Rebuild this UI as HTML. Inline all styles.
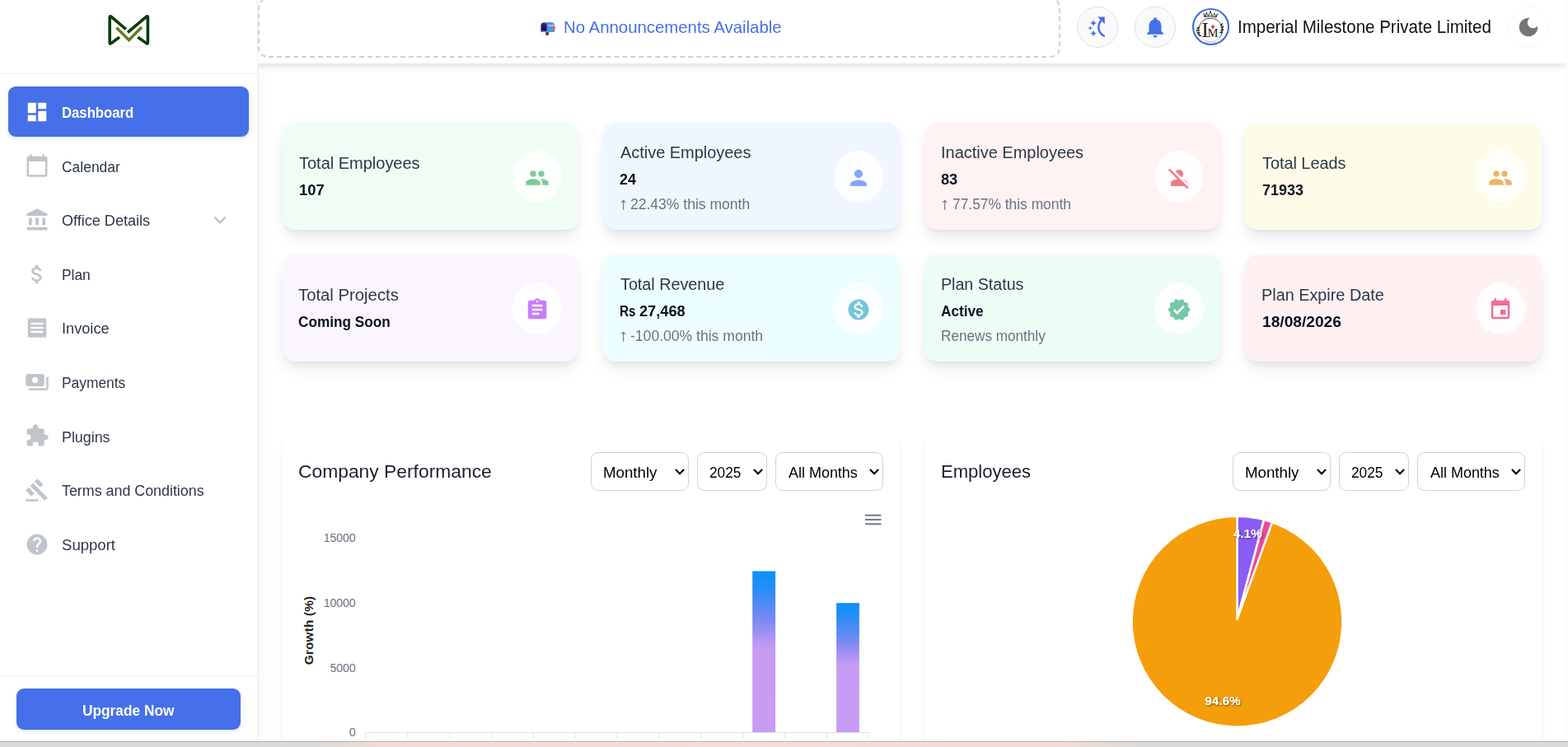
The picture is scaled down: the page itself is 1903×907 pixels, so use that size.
<!DOCTYPE html>
<html lang="en"><head><meta charset="utf-8"><title>Dashboard</title>
<style>
*{box-sizing:border-box;margin:0;padding:0}
html,body{width:1903px;height:907px;overflow:hidden;background:#fff;font-family:"Liberation Sans",sans-serif}
.a,.t,.ic{position:absolute}
.t{white-space:nowrap;line-height:1;transform-origin:0 0}
.card{position:absolute;width:359.5px;height:130px;border-radius:15px;box-shadow:0 10px 20px -3px rgba(0,0,0,.10),0 4px 6px -2px rgba(0,0,0,.05)}
.el{position:absolute;width:60px;height:63px;border-radius:50%;background:rgba(255,255,255,.82)}
.panel{position:absolute;top:528.5px;width:749px;height:420px;border-radius:13px;background:#fff;box-shadow:0 5px 6px rgba(0,0,0,.08)}
.sel{position:absolute;top:549px;height:47px;border:1px solid #cdd3dd;border-radius:9px;background:#fff}
.cbtn{position:absolute;width:50px;height:50px;border-radius:50%;top:8px}
</style></head><body>
<div class="a" style="left:0;top:0;width:313px;height:900px;background:#fff;box-shadow:4px 0 10px rgba(0,0,0,.04)"></div>
<div class="a" style="left:313px;top:0;width:1588px;height:77px;background:#fff;box-shadow:0 4px 6px rgba(0,0,0,.11)"></div>
<div class="a" style="left:0;top:0;width:313px;height:900px;background:#fff;border-right:1px solid #eceef0"></div>
<svg class="a" style="left:120px;top:10px" width="75" height="55" viewBox="120 10 75 55" fill="none">
<g style="filter:drop-shadow(.5px .6px .5px rgba(0,0,0,.3))" stroke-linecap="round" stroke-linejoin="round">
<path d="M152.9 35.5L134.75 20.16Q133.2 18.9 133.2 20.9L133.2 51.8Q133.2 53.8 134.84 52.65L145 45.1" stroke="#0b3d0c" stroke-width="3.5" stroke-linecap="butt"/>
<path d="M155 39.4L177.85 20.16Q179.4 18.9 179.4 20.9L179.4 51.8Q179.4 53.8 177.76 52.65L167.3 45.1" stroke="#0b3d0c" stroke-width="3.5" stroke-linecap="butt"/>
<path d="M141.4 33.7L156.5 48.7L171.9 33" stroke="#5f7f1b" stroke-width="3.3" stroke-linecap="butt" stroke-linejoin="miter"/>
</g>
<line x1="138" y1="56.9" x2="174" y2="56.9" stroke="#d4d4d4" stroke-width=".8" stroke-dasharray="2 1.2"/>
</svg>
<div class="a" style="left:0;top:89px;width:312px;height:1px;background:#eff0f2"></div>
<div class="a" style="left:10px;top:105px;width:292px;height:61px;border-radius:9px;background:#4570ea;box-shadow:0 2px 5px rgba(69,112,234,.2)"></div>
<svg class="ic" style="left:30px;top:121.0px" width="30" height="30" viewBox="0 0 24 24" fill="#ffffff" ><path d="M3 13h8V3H3v10zm0 8h8v-6H3v6zm10 0h8V11h-8v10zm0-18v6h8V3h-8z"/></svg>
<svg class="ic" style="left:30px;top:185.68px" width="30" height="30" viewBox="0 0 24 24" fill="#bfc5ca" ><path d="M20 3h-1V1h-2v2H7V1H5v2H4c-1.1 0-2 .9-2 2v16c0 1.1.9 2 2 2h16c1.1 0 2-.9 2-2V5c0-1.1-.9-2-2-2zm0 18H4V8h16v13z"/></svg>
<svg class="ic" style="left:30px;top:252.16px" width="30" height="30" viewBox="0 0 24 24" fill="#bfc5ca" ><path d="M4 10h3v7H4zM10.5 10h3v7h-3zM2 19h20v3H2zM17 10h3v7h-3zM12 1L2 6v2h20V6z"/></svg>
<svg class="ic" style="left:30px;top:317.74px" width="30" height="30" viewBox="0 0 24 24" fill="#bfc5ca" ><path d="M11.8 10.9c-2.27-.59-3-1.2-3-2.15 0-1.09 1.01-1.85 2.7-1.85 1.78 0 2.44.85 2.5 2.1h2.21c-.07-1.72-1.12-3.3-3.21-3.81V3h-3v2.160c-1.94.42-3.5 1.68-3.5 3.61 0 2.31 1.91 3.46 4.7 4.13 2.5.6 3 1.48 3 2.41 0 .69-.49 1.79-2.7 1.79-2.06 0-2.87-.92-2.98-2.1h-2.2c.12 2.19 1.76 3.42 3.68 3.83V21h3v-2.150c1.95-.37 3.5-1.5 3.5-3.55 0-2.84-2.43-3.81-4.7-4.4z"/></svg>
<svg class="ic" style="left:30px;top:383.32px" width="30" height="30" viewBox="0 0 24 24" fill="#bfc5ca" ><path d="M18 17H6v-2h12v2zm0-4H6v-2h12v2zm0-4H6V7h12v2zM3 22l1.5-1.500L6 22l1.5-1.500L9 22l1.5-1.500L12 22l1.5-1.500L15 22l1.5-1.500L18 22l1.5-1.500L21 22V2l-1.500 1.500L18 2l-1.500 1.500L15 2l-1.500 1.500L12 2l-1.500 1.500L9 2 7.500 3.500 6 2 4.500 3.500 3 2v20z"/></svg>
<svg class="ic" style="left:30px;top:448.9px" width="30" height="30" viewBox="0 0 24 24" fill="#bfc5ca" ><path d="M19 14V6c0-1.100-.900-2-2-2H3c-1.100 0-2 .900-2 2v8c0 1.100.900 2 2 2h14c1.100 0 2-.900 2-2zm-9-1c-1.660 0-3-1.340-3-3s1.340-3 3-3 3 1.340 3 3-1.340 3-3 3zm13-6v11c0 1.100-.900 2-2 2H4v-2h17V7h2z"/></svg>
<svg class="ic" style="left:30px;top:514.48px" width="30" height="30" viewBox="0 0 24 24" fill="#bfc5ca" ><path d="M20.500 11H19V7c0-1.100-.900-2-2-2h-4V3.500C13 2.120 11.880 1 10.500 1S8 2.120 8 3.500V5H4c-1.100 0-1.990.900-1.990 2v3.800H3.500c1.490 0 2.700 1.210 2.700 2.700s-1.210 2.700-2.700 2.700H2V20c0 1.100.900 2 2 2h3.800v-1.500c0-1.490 1.210-2.700 2.700-2.700 1.490 0 2.700 1.210 2.700 2.700V22H17c1.100 0 2-.900 2-2v-4h1.500c1.380 0 2.500-1.120 2.500-2.500S21.880 11 20.500 11z"/></svg>
<svg class="ic" style="left:30px;top:580.06px" width="30" height="30" viewBox="0 0 24 24" fill="#bfc5ca" ><path d="M1 21h12v2H1zM5.245 8.070l2.830-2.830 14.140 14.140-2.830 2.830zM12.317 1l5.657 5.656-2.830 2.830-5.654-5.660zM3.825 9.485l5.657 5.657-2.828 2.828-5.657-5.657z"/></svg>
<svg class="ic" style="left:30px;top:645.64px" width="30" height="30" viewBox="0 0 24 24" fill="#bfc5ca" ><path d="M12 2C6.480 2 2 6.480 2 12s4.480 10 10 10 10-4.480 10-10S17.520 2 12 2zm1 17h-2v-2h2v2zm2.070-7.750l-.900.920C13.450 12.900 13 13.500 13 15h-2v-.500c0-1.100.450-2.100 1.170-2.830l1.240-1.260c.370-.360.590-.860.590-1.410 0-1.100-.900-2-2-2s-2 .900-2 2H8c0-2.210 1.790-4 4-4s4 1.790 4 4c0 .880-.360 1.680-.930 2.250z"/></svg>
<svg class="ic" style="left:252.1px;top:252.2px" width="30" height="30" viewBox="0 0 24 24" fill="#bfc5ca"><path d="M16.59 8.59L12 13.17 7.41 8.59 6 10l6 6 6-6z"/></svg>
<div class="a" style="left:0;top:820px;width:312px;height:1px;background:#eff0f2"></div>
<div class="a" style="left:20px;top:836px;width:272px;height:50px;border-radius:9px;background:#4570ea;box-shadow:0 2px 5px rgba(69,112,234,.2)"></div>
<div class="a" style="left:313px;top:-3px;width:974px;height:73px;border:2px dashed #c9d3e0;border-radius:12px"></div>
<svg class="a" style="left:654px;top:25px" width="22" height="20" viewBox="654 25 22 20">
<defs><linearGradient id="mbg" x1="0" y1="0" x2="1" y2="1"><stop offset="0" stop-color="#5a8fe0"/><stop offset="1" stop-color="#3f9be6"/></linearGradient>
<linearGradient id="mbd" x1="0" y1="0" x2="0" y2="1"><stop offset="0" stop-color="#4a1577"/><stop offset="1" stop-color="#24063f"/></linearGradient></defs>
<rect x="662.3" y="38" width="3.6" height="4.8" fill="#6b2e2e"/>
<path d="M656.1 38.9V31.2Q656.1 27.1 660.2 27.1H669.6Q673 27.1 673 31.5V38.9Z" fill="url(#mbg)"/>
<path d="M656.9 37.5V31.2Q656.9 27.9 660.2 27.9Q663.6 27.9 663.6 31.2V37.5Z" fill="url(#mbd)"/>
<rect x="665.2" y="29.9" width="8.6" height="2" rx=".8" fill="#b9b6cc"/>
<rect x="670.2" y="32" width="3.6" height="3.9" fill="#f4632f"/>
</svg>
<div class="cbtn" style="left:1307px;background:#fafafa;border:1px solid #e0e0e0"></div>
<div class="cbtn" style="left:1377px;background:#fafafa;border:1px solid #e0e0e0"></div>
<svg class="ic" style="left:1317px;top:18px" width="30" height="30" viewBox="0 0 24 24" fill="#4570ea" ><path d="M7.060 8.940L5 8l2.060-.940L8 5l.940 2.060L11 8l-2.060.940L8 11l-.940-2.060zM8 21l.940-2.060L11 18l-2.060-.940L8 15l-.940 2.060L5 18l2.060.940L8 21zm-3.630-7.470L3 12.900l1.370-.630L5 10.900l.630 1.370L7 12.900l-1.370.630L5 14.900l-.630-1.370zM12 12c0-2.730 1.080-5.270 2.750-7.250L12 2h7v7l-2.820-2.820C14.840 7.820 14 9.880 14 12c0 3.320 2.100 6.360 5 7.820V22c-4.090-1.590-7-5.650-7-10z"/></svg>
<svg class="ic" style="left:1387px;top:18px" width="30" height="30" viewBox="0 0 24 24" fill="#4570ea" ><path d="M12 22c1.100 0 2-.900 2-2h-4c0 1.100.890 2 2 2zm6-6v-5c0-3.070-1.640-5.640-4.500-6.320V4c0-.830-.670-1.500-1.500-1.500s-1.500.670-1.500 1.500v.680C7.630 5.360 6 7.920 6 11v5l-2 2v1h16v-1l-2-2z"/></svg>
<svg class="a" style="left:1445px;top:8px" width="50" height="50" viewBox="1445 8 50 50">
<circle cx="1469.5" cy="32.5" r="21.5" fill="#fff" stroke="#3f6be2" stroke-width="2.1"/>
<circle cx="1469.1" cy="36.3" r="14.4" fill="none" stroke="#b5b5b5" stroke-width=".6"/><circle cx="1469.1" cy="36.3" r="14.4" fill="none" stroke="#3a3a3a" stroke-width=".75" stroke-dasharray="58 32.5" transform="rotate(-190 1469.1 36.3)"/>
<path d="M1461.7 20.7L1461 16.6L1463.2 20.1L1464.2 15L1466.4 19.8L1468.9 13.8L1471.4 19.8L1473.9 16L1475.2 20.4L1477.7 16.6L1476.1 21Q1469 18.3 1461.7 20.7Z" fill="none" stroke="#303030" stroke-width=".95" stroke-linejoin="round"/><circle cx="1468.9" cy="13.9" r=".8" fill="#303030"/>
<g fill="#1d1d1d">
<ellipse cx="1454.2" cy="34" rx="2.2" ry=".9" transform="rotate(-35 1454.2 34)"/>
<ellipse cx="1453.6" cy="37" rx="2.3" ry=".9" transform="rotate(-15 1453.6 37)"/>
<ellipse cx="1454.3" cy="40" rx="2.3" ry=".9" transform="rotate(10 1454.3 40)"/>
<ellipse cx="1455.8" cy="42.8" rx="2.3" ry=".9" transform="rotate(30 1455.8 42.8)"/>
<ellipse cx="1482.6" cy="30" rx="2.2" ry=".9" transform="rotate(-50 1482.6 30)"/>
<ellipse cx="1483.6" cy="33" rx="2.3" ry=".9" transform="rotate(-35 1483.6 33)"/>
<ellipse cx="1483.3" cy="36.3" rx="2.3" ry=".9" transform="rotate(-20 1483.3 36.3)"/>
<ellipse cx="1482.2" cy="39.3" rx="2.2" ry=".9" transform="rotate(-5 1482.2 39.3)"/>
</g>
<path d="M1472 29.8L1474.3 32.5L1472 35.2L1469.7 32.5Z" fill="#f0343a"/>
<text x="1458.2" y="44.9" font-family="'Liberation Serif',serif" font-size="25.5" fill="#2b2411">I</text>
<text x="1465.6" y="44.9" font-family="'Liberation Serif',serif" font-size="15.6" fill="#2b2411" textLength="13" lengthAdjust="spacingAndGlyphs">M</text>
<line x1="1462.5" y1="51.2" x2="1476.5" y2="51.2" stroke="#b0b0b0" stroke-width=".9" stroke-dasharray="1.6 .8"/>
</svg>
<div class="cbtn" style="left:1830px;background:#fff;border:1px solid #f8f8f8"></div>
<svg class="ic" style="left:1840px;top:18px" width="30" height="30" viewBox="0 0 24 24" fill="#757575" ><path d="M12 3c-4.970 0-9 4.030-9 9s4.030 9 9 9 9-4.030 9-9c0-.460-.040-.920-.100-1.360-.980 1.370-2.580 2.260-4.400 2.260-2.980 0-5.400-2.420-5.400-5.400 0-1.810.890-3.420 2.260-4.400-.440-.060-.900-.100-1.360-.100z"/></svg>
<div class="card" style="left:343px;top:149px;width:359px;background:#f0fdf4"></div>
<div class="card" style="left:732px;top:149px;width:360px;background:#eff6ff"></div>
<div class="card" style="left:1122px;top:149px;width:359px;background:#fef2f2"></div>
<div class="card" style="left:1511px;top:149px;width:360px;background:#fefce8"></div>
<div class="card" style="left:343px;top:309px;width:359px;background:#faf5ff"></div>
<div class="card" style="left:732px;top:309px;width:360px;background:#ecfeff"></div>
<div class="card" style="left:1122px;top:309px;width:359px;background:#ecfdf5"></div>
<div class="card" style="left:1511px;top:309px;width:360px;background:#fff1f2"></div>
<div class="el" style="left:622px;top:182.9px"></div>
<svg class="ic" style="left:637px;top:200.8px" width="30" height="30" viewBox="0 0 24 24" fill="#7bcb9c" ><path d="M16 11c1.660 0 2.990-1.340 2.990-3S17.660 5 16 5c-1.660 0-3 1.340-3 3s1.340 3 3 3zm-8 0c1.660 0 2.990-1.340 2.990-3S9.660 5 8 5C6.340 5 5 6.340 5 8s1.340 3 3 3zm0 2c-2.330 0-7 1.170-7 3.500V19h14v-2.500c0-2.330-4.670-3.500-7-3.500zm8 0c-.290 0-.620.020-.970.050 1.160.840 1.970 1.970 1.970 3.450V19h6v-2.500c0-2.330-4.670-3.500-7-3.500z"/></svg>
<div class="el" style="left:1012px;top:182.9px"></div>
<svg class="ic" style="left:1027px;top:200.8px" width="30" height="30" viewBox="0 0 24 24" fill="#84a7f9" ><path d="M12 12c2.210 0 4-1.790 4-4s-1.790-4-4-4-4 1.790-4 4 1.790 4 4 4zm0 2c-2.670 0-8 1.340-8 4v2h16v-2c0-2.660-5.330-4-8-4z"/></svg>
<div class="el" style="left:1401px;top:182.9px"></div>
<svg class="ic" style="left:1416px;top:200.8px" width="30" height="30" viewBox="0 0 24 24" fill="#f17c84" ><path d="M8.650 5.820C9.360 4.720 10.600 4 12 4c2.210 0 4 1.790 4 4 0 1.400-.720 2.640-1.820 3.350L8.650 5.820zM20 17.170c-.020-1.100-.630-2.110-1.610-2.620-.540-.280-1.130-.540-1.770-.760L20 17.170zm1.190 4.020L2.810 2.810 1.390 4.220l8.890 8.890c-1.810.230-3.390.790-4.670 1.450C4.610 15.070 4 16.100 4 17.220V20h13.170l2.610 2.610 1.410-1.420z"/></svg>
<div class="el" style="left:1791px;top:182.9px"></div>
<svg class="ic" style="left:1806px;top:200.8px" width="30" height="30" viewBox="0 0 24 24" fill="#e6b768" ><path d="M16 11c1.660 0 2.990-1.340 2.990-3S17.660 5 16 5c-1.660 0-3 1.340-3 3s1.340 3 3 3zm-8 0c1.660 0 2.990-1.340 2.990-3S9.660 5 8 5C6.340 5 5 6.340 5 8s1.340 3 3 3zm0 2c-2.330 0-7 1.170-7 3.500V19h14v-2.500c0-2.330-4.670-3.500-7-3.500zm8 0c-.290 0-.620.020-.970.050 1.160.840 1.970 1.970 1.970 3.450V19h6v-2.500c0-2.330-4.670-3.500-7-3.500z"/></svg>
<div class="el" style="left:622px;top:342.9px"></div>
<svg class="ic" style="left:637px;top:360.8px" width="30" height="30" viewBox="0 0 24 24" fill="#c77dfa" ><path d="M19 3h-4.180C14.400 1.840 13.300 1 12 1c-1.300 0-2.400.840-2.820 2H5c-1.100 0-2 .900-2 2v14c0 1.100.900 2 2 2h14c1.100 0 2-.900 2-2V5c0-1.100-.900-2-2-2zm-7 0c.550 0 1 .450 1 1s-.450 1-1 1-1-.450-1-1 .450-1 1-1zm2 14H7v-2h7v2zm3-4H7v-2h10v2zm0-4H7V7h10v2z"/></svg>
<div class="el" style="left:1012px;top:342.9px"></div>
<svg class="ic" style="left:1027px;top:360.8px" width="30" height="30" viewBox="0 0 24 24" fill="#72c6da" ><path d="M12 2C6.480 2 2 6.480 2 12s4.480 10 10 10 10-4.480 10-10S17.520 2 12 2zm1.410 16.090V20h-2.670v-1.930c-1.710-.360-3.160-1.460-3.270-3.400h1.960c.100 1.050.820 1.870 2.650 1.870 1.960 0 2.400-.980 2.400-1.590 0-.830-.440-1.610-2.670-2.140-2.480-.600-4.180-1.620-4.180-3.670 0-1.720 1.390-2.840 3.110-3.210V4h2.670v1.950c1.860.450 2.790 1.860 2.850 3.390H14.300c-.050-1.110-.640-1.870-2.220-1.870-1.500 0-2.400.680-2.400 1.640 0 .840.650 1.390 2.670 1.910s4.180 1.390 4.180 3.910c-.010 1.830-1.380 2.830-3.120 3.160z"/></svg>
<div class="el" style="left:1401px;top:342.9px"></div>
<svg class="ic" style="left:1416px;top:360.8px" width="30" height="30" viewBox="0 0 24 24" fill="#73c8a8" ><path d="M23 12l-2.440-2.790.340-3.690-3.610-.820-1.890-3.200L12 2.960 8.600 1.500 6.710 4.690 3.100 5.500l.340 3.700L1 12l2.440 2.790-.340 3.700 3.610.820L8.600 22.500l3.400-1.470 3.400 1.460 1.890-3.190 3.610-.820-.340-3.690L23 12zm-12.910 4.720l-3.800-3.810 1.480-1.480 2.320 2.330 5.850-5.870 1.480 1.480-7.330 7.350z"/></svg>
<div class="el" style="left:1791px;top:342.9px"></div>
<svg class="ic" style="left:1806px;top:360.8px" width="30" height="30" viewBox="0 0 24 24" fill="#f26d94" ><path d="M17 12h-5v5h5v-5zM16 1v2H8V1H6v2H5c-1.110 0-1.990.900-1.990 2L3 19c0 1.100.890 2 2 2h14c1.100 0 2-.900 2-2V5c0-1.100-.900-2-2-2h-1V1h-2zm3 18H5V8h14v11z"/></svg>
<div class="panel" style="left:343px"></div>
<div class="sel" style="left:717.2px;width:118.4px"></div>
<div class="sel" style="left:846.3px;width:84.5px"></div>
<div class="sel" style="left:941.1px;width:130.5px"></div>
<svg class="a" style="left:817.05px;top:566px" width="16" height="14" viewBox="-8 -7 16 14" fill="none"><path d="M-5.1 -2.9L0 2.3L5.1 -2.9" stroke="#000" stroke-width="2.1"/></svg>
<svg class="a" style="left:911.95px;top:566px" width="16" height="14" viewBox="-8 -7 16 14" fill="none"><path d="M-5.1 -2.9L0 2.3L5.1 -2.9" stroke="#000" stroke-width="2.1"/></svg>
<svg class="a" style="left:1053.0px;top:566px" width="16" height="14" viewBox="-8 -7 16 14" fill="none"><path d="M-5.1 -2.9L0 2.3L5.1 -2.9" stroke="#000" stroke-width="2.1"/></svg>
<div class="panel" style="left:1122px"></div>
<div class="sel" style="left:1496.2px;width:118.4px"></div>
<div class="sel" style="left:1625.3px;width:84.5px"></div>
<div class="sel" style="left:1720.1px;width:130.5px"></div>
<svg class="a" style="left:1596.05px;top:566px" width="16" height="14" viewBox="-8 -7 16 14" fill="none"><path d="M-5.1 -2.9L0 2.3L5.1 -2.9" stroke="#000" stroke-width="2.1"/></svg>
<svg class="a" style="left:1690.95px;top:566px" width="16" height="14" viewBox="-8 -7 16 14" fill="none"><path d="M-5.1 -2.9L0 2.3L5.1 -2.9" stroke="#000" stroke-width="2.1"/></svg>
<svg class="a" style="left:1832.0px;top:566px" width="16" height="14" viewBox="-8 -7 16 14" fill="none"><path d="M-5.1 -2.9L0 2.3L5.1 -2.9" stroke="#000" stroke-width="2.1"/></svg>
<svg class="a" style="left:343px;top:610px" width="749" height="290" viewBox="343 610 749 290">
<defs><linearGradient id="bg1" x1="0" y1="0" x2="0" y2="1"><stop offset="0" stop-color="#0c90f8"/><stop offset=".12" stop-color="#2b8df6"/><stop offset=".30" stop-color="#7a89f1"/><stop offset=".48" stop-color="#c79bf4"/><stop offset="1" stop-color="#c89cf4"/></linearGradient></defs>
<g fill="#6e8192"><rect x="1050" y="624.6" width="19.4" height="2.1"/><rect x="1050" y="629.9" width="19.4" height="2.1"/><rect x="1050" y="635.2" width="19.4" height="2.1"/></g>
<g font-family="'Liberation Sans',sans-serif" font-size="14" fill="#6b7280" text-anchor="end">
<text x="431.6" y="658.2">15000</text><text x="431.6" y="737.0">10000</text><text x="431.6" y="815.8">5000</text><text x="431.6" y="893.9">0</text></g>
<text transform="translate(380.3 765.5) rotate(-90)" text-anchor="middle" font-family="'Liberation Sans',sans-serif" font-weight="700" font-size="15.4" fill="#222" textLength="83.3" lengthAdjust="spacing">Growth (%)</text>
<rect x="913.2" y="693.5" width="27.9" height="195.8" fill="url(#bg1)"/>
<rect x="1015.1" y="732.2" width="27.8" height="157.1" fill="url(#bg1)"/>
<g stroke="#e0e0e0" stroke-width="1" fill="none"><path d="M443.5 889.5H1054.5"/>
<path d="M443.8 889.5V897"/>
<path d="M494.7 889.5V897"/>
<path d="M545.5 889.5V897"/>
<path d="M596.4 889.5V897"/>
<path d="M647.3 889.5V897"/>
<path d="M698.2 889.5V897"/>
<path d="M749.0 889.5V897"/>
<path d="M799.9 889.5V897"/>
<path d="M850.8 889.5V897"/>
<path d="M901.7 889.5V897"/>
<path d="M952.5 889.5V897"/>
<path d="M1003.4 889.5V897"/>
<path d="M1054.3 889.5V897"/>
</g></svg>
<svg class="a" style="left:1360px;top:615px" width="285" height="285" viewBox="1360 615 285 285">
<defs><filter id="ds" x="-20%" y="-20%" width="140%" height="150%"><feDropShadow dx="1" dy="1" stdDeviation=".8" flood-color="#000" flood-opacity=".55"/></filter></defs>
<circle cx="1501.5" cy="754.7" r="128.0" fill="#f59e0b" stroke="#fff" stroke-width="2.6"/>
<path d="M1501.5 751.6L1501.50 626.70A128.0 128.0 0 0 1 1534.11 630.92Z" fill="#8b5cf6" stroke="#fff" stroke-width="2.6" stroke-linejoin="round"/>
<path d="M1501.5 751.6L1534.11 630.92A128.0 128.0 0 0 1 1544.10 634.00Z" fill="#ec4899" stroke="#fff" stroke-width="2.6" stroke-linejoin="round"/>
<g font-family="'Liberation Sans',sans-serif" font-weight="700" font-size="15.3" fill="#fff" text-anchor="middle" filter="url(#ds)">
<text x="1514.1" y="653.0">4.1%</text><text x="1483.9" y="855.8">94.6%</text></g>
</svg>
<span class="t" style="left:74.71px;top:127.54px;font-size:18.8px;font-weight:700;color:#ffffff;transform:scaleX(0.8897)">Dashboard</span>
<span class="t" style="left:74.73px;top:193.54px;font-size:18.8px;font-weight:400;color:#2d3748;transform:scaleX(0.9289)">Calendar</span>
<span class="t" style="left:74.79px;top:258.54px;font-size:18.8px;font-weight:400;color:#2d3748;transform:scaleX(0.9614)">Office Details</span>
<span class="t" style="left:74.91px;top:324.54px;font-size:18.8px;font-weight:400;color:#2d3748;transform:scaleX(0.9244)">Plan</span>
<span class="t" style="left:74.66px;top:389.54px;font-size:18.8px;font-weight:400;color:#2d3748;transform:scaleX(0.9676)">Invoice</span>
<span class="t" style="left:74.81px;top:455.54px;font-size:18.8px;font-weight:400;color:#2d3748;transform:scaleX(0.9244)">Payments</span>
<span class="t" style="left:74.77px;top:521.54px;font-size:18.8px;font-weight:400;color:#2d3748;transform:scaleX(0.9504)">Plugins</span>
<span class="t" style="left:75.14px;top:586.54px;font-size:18.8px;font-weight:400;color:#2d3748;transform:scaleX(0.9501)">Terms and Conditions</span>
<span class="t" style="left:74.86px;top:652.54px;font-size:18.8px;font-weight:400;color:#2d3748;transform:scaleX(0.9879)">Support</span>
<span class="t" style="left:99.86px;top:853.54px;font-size:18.8px;font-weight:700;color:#ffffff;transform:scaleX(0.9203)">Upgrade Now</span>
<span class="t" style="left:684.47px;top:22.91px;font-size:20.6px;font-weight:400;color:#4570ea;transform:scaleX(0.9889)">No Announcements Available</span>
<span class="t" style="left:1501.95px;top:21.50px;font-size:21.2px;font-weight:400;color:#111111;transform:scaleX(0.9684)">Imperial Milestone Private Limited</span>
<span class="t" style="left:362.80px;top:187.72px;font-size:20.35px;font-weight:400;color:#2d3748;transform:scaleX(0.9821)">Total Employees</span>
<span class="t" style="left:362.50px;top:221.76px;font-size:18.3px;font-weight:700;color:#0b1220;transform:scaleX(1.0047)">107</span>
<span class="t" style="left:752.70px;top:175.02px;font-size:20.35px;font-weight:400;color:#2d3748;transform:scaleX(0.9797)">Active Employees</span>
<span class="t" style="left:752.26px;top:208.96px;font-size:18.3px;font-weight:700;color:#0b1220;transform:scaleX(0.9760)">24</span>
<span class="t" style="left:749.90px;top:236.70px;font-size:20.5px;font-weight:400;color:#6b7280;transform:scaleX(1.2398)">↑</span>
<span class="t" style="left:765.12px;top:238.59px;font-size:18.5px;font-weight:400;color:#6b7280;transform:scaleX(0.9472)">22.43% this month</span>
<span class="t" style="left:1142.20px;top:175.02px;font-size:20.35px;font-weight:400;color:#2d3748;transform:scaleX(0.9812)">Inactive Employees</span>
<span class="t" style="left:1141.55px;top:208.96px;font-size:18.3px;font-weight:700;color:#0b1220;transform:scaleX(0.9930)">83</span>
<span class="t" style="left:1139.70px;top:236.70px;font-size:20.5px;font-weight:400;color:#6b7280;transform:scaleX(1.2398)">↑</span>
<span class="t" style="left:1155.63px;top:238.59px;font-size:18.5px;font-weight:400;color:#6b7280;transform:scaleX(0.9393)">77.57% this month</span>
<span class="t" style="left:1531.50px;top:187.82px;font-size:20.35px;font-weight:400;color:#2d3748;transform:scaleX(0.9743)">Total Leads</span>
<span class="t" style="left:1532.38px;top:221.86px;font-size:18.3px;font-weight:700;color:#0b1220;transform:scaleX(0.9808)">71933</span>
<span class="t" style="left:362.39px;top:347.72px;font-size:20.35px;font-weight:400;color:#2d3748;transform:scaleX(0.9975)">Total Projects</span>
<span class="t" style="left:362.11px;top:381.76px;font-size:18.3px;font-weight:700;color:#0b1220;transform:scaleX(0.9404)">Coming Soon</span>
<span class="t" style="left:752.60px;top:335.02px;font-size:20.35px;font-weight:400;color:#2d3748;transform:scaleX(0.9711)">Total Revenue</span>
<span class="t" style="left:752.21px;top:368.96px;font-size:18.3px;font-weight:700;color:#0b1220;transform:scaleX(0.8363)">Rs</span>
<span class="t" style="left:775.85px;top:368.96px;font-size:18.3px;font-weight:700;color:#0b1220;transform:scaleX(0.9946)">27,468</span>
<span class="t" style="left:749.90px;top:396.70px;font-size:20.5px;font-weight:400;color:#6b7280;transform:scaleX(1.2398)">↑</span>
<span class="t" style="left:765.20px;top:398.59px;font-size:18.5px;font-weight:400;color:#6b7280;transform:scaleX(0.9493)">-100.00% this month</span>
<span class="t" style="left:1142.43px;top:335.02px;font-size:20.35px;font-weight:400;color:#2d3748;transform:scaleX(0.9645)">Plan Status</span>
<span class="t" style="left:1141.76px;top:368.96px;font-size:18.3px;font-weight:700;color:#0b1220;transform:scaleX(0.9400)">Active</span>
<span class="t" style="left:1141.63px;top:398.59px;font-size:18.5px;font-weight:400;color:#6b7280;transform:scaleX(0.9269)">Renews monthly</span>
<span class="t" style="left:1531.21px;top:347.82px;font-size:20.35px;font-weight:400;color:#2d3748;transform:scaleX(0.9747)">Plan Expire Date</span>
<span class="t" style="left:1531.95px;top:381.86px;font-size:18.3px;font-weight:700;color:#0b1220;transform:scaleX(1.0486)">18/08/2026</span>
<span class="t" style="left:362.06px;top:562.19px;font-size:22.4px;font-weight:400;color:#1a202c;transform:scaleX(1.0198)">Company Performance</span>
<span class="t" style="left:1141.93px;top:562.19px;font-size:22.4px;font-weight:400;color:#1a202c;transform:scaleX(0.9853)">Employees</span>
<span class="t" style="left:731.70px;top:564.76px;font-size:18.3px;font-weight:400;color:#000;transform:scaleX(1.0216)">Monthly</span>
<span class="t" style="left:861.04px;top:564.76px;font-size:18.3px;font-weight:400;color:#000;transform:scaleX(0.9409)">2025</span>
<span class="t" style="left:956.90px;top:564.76px;font-size:18.3px;font-weight:400;color:#000;transform:scaleX(0.9821)">All Months</span>
<span class="t" style="left:1510.70px;top:564.76px;font-size:18.3px;font-weight:400;color:#000;transform:scaleX(1.0216)">Monthly</span>
<span class="t" style="left:1640.04px;top:564.76px;font-size:18.3px;font-weight:400;color:#000;transform:scaleX(0.9409)">2025</span>
<span class="t" style="left:1735.90px;top:564.76px;font-size:18.3px;font-weight:400;color:#000;transform:scaleX(0.9821)">All Months</span><div class="a" style="left:1901px;top:0;width:2px;height:900px;background:#fcfcfc"></div>
<div class="a" style="left:0;top:900px;width:1903px;height:7px;background:linear-gradient(90deg,#dadada 0,#dadada 19.5%,#f1dcd1 24.5%,#f3ded3 50%,#f1dcd1 68%,#dadada 73.5%,#dadada 100%);border-top:1px solid rgba(0,0,0,.2)"></div>

</body></html>
